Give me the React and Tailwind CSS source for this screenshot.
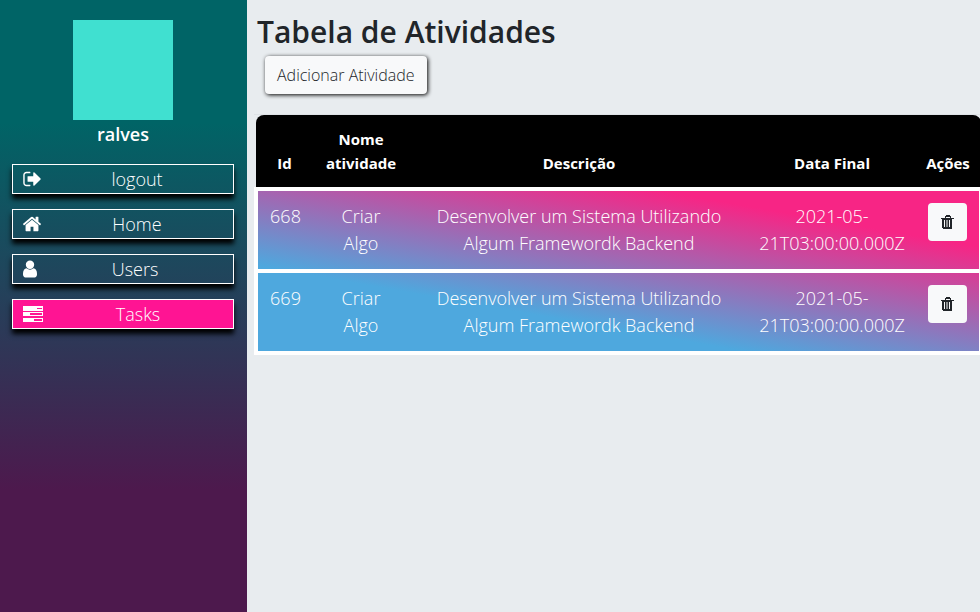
const ICONS = {
  logout: {
    box: "0 0 1568 1792",
    size: "h-5 w-[18px]",
    d: "M640 1440q0 4 1 20t.5 26.5-3 23.5-10 19.5-20.5 6.5h-320q-119 0-203.5-84.5t-84.5-203.5v-704q0-119 84.5-203.5t203.5-84.5h320q13 0 22.5 9.5t9.5 22.5q0 4 1 20t.5 26.5-3 23.5-10 19.5-20.5 6.5h-320q-66 0-113 47t-47 113v704q0 66 47 113t113 47h312l11.5 1 11.5 3 8 5.5 7 9 2 13.5zm928-544q0 26-19 45l-544 544q-19 19-45 19t-45-19-19-45v-288h-448q-26 0-45-19t-19-45v-384q0-26 19-45t45-19h448v-288q0-26 19-45t45-19 45 19l544 544q19 19 19 45z",
  },
  home: {
    box: "90 0 1612 1792",
    size: "h-5 w-[18px]",
    d: "M1472 992v480q0 26-19 45t-45 19h-384v-384h-256v384h-384q-26 0-45-19t-19-45v-480q0-1 .5-3t.5-3l575-474 575 474q1 2 1 6zm223-69l-62 74q-8 9-21 11h-3q-13 0-21-7l-692-577-692 577q-12 8-24 7-13-2-21-11l-62-74q-8-10-7-23.5t11-21.5l719-599q32-26 76-26t76 26l244 204v-195q0-14 9-23t23-9h192q14 0 23 9t9 23v408l219 182q10 8 11 21.5t-7 23.5z",
  },
  user: {
    box: "256 0 1280 1792",
    size: "h-5 w-[14px]",
    d: "M1536 1399q0 109-62.5 187t-150.5 78h-854q-88 0-150.5-78t-62.5-187q0-85 8.5-160.5t31.5-152 58.5-131 94-89 134.5-34.5q131 128 313 128t313-128q76 0 134.5 34.5t94 89 58.5 131 31.5 152 8.5 160.5zm-256-887q0 159-112.5 271.5t-271.5 112.5-271.5-112.5-112.5-271.5 112.5-271.5 271.5-112.5 271.5 112.5 112.5 271.5z",
  },
  tasks: {
    box: "0 0 20 20",
    size: "size-5",
    d: "M0 2h20v5H0zM14 4v1h5V4zM0 8h20v4H0zM7 9v2h12V9zM0 14h20v4H0zM11 15v2h8v-2z",
  },
  trash: {
    box: "0 0 13 14",
    size: "h-3.5 w-[13px]",
    d: "M5 0h4v1h1v2h3v1h-2v10H2V13H1V4H0V3h4V1h1zM5 2v1h4V2zM3 5v7h1V5zM5.5 5v7h1V5zM8 5v7h1V5z",
  },
};

function Icon({ name }) {
  const { box, size, d } = ICONS[name];
  return (
    <svg viewBox={box} className={`${size} shrink-0 fill-current`} fillRule="evenodd" aria-hidden="true">
      <path d={d} />
    </svg>
  );
}

const MENU = [
  { icon: "logout", label: "logout" },
  { icon: "home", label: "Home" },
  { icon: "user", label: "Users" },
  { icon: "tasks", label: "Tasks", active: true },
];

const TASKS = [
  {
    id: 668,
    name: "Criar Algo",
    description: "Desenvolver um Sistema Utilizando Algum Framewordk Backend",
    due: "2021-05-21T03:00:00.000Z",
  },
  {
    id: 669,
    name: "Criar Algo",
    description: "Desenvolver um Sistema Utilizando Algum Framewordk Backend",
    due: "2021-05-21T03:00:00.000Z",
  },
];

function Sidebar() {
  return (
    <aside className="flex w-[247px] shrink-0 flex-col items-center bg-[linear-gradient(180deg,#006466_20%,#4d194d_80%)] pt-5 pr-[13px] pl-3 text-white">
      <div className="size-25 bg-[#40e0d0]" />
      <p className="text-lg leading-7 font-semibold">ralves</p>
      <nav className="mt-4 flex w-full flex-col gap-[15px]">
        {MENU.map(({ icon, label, active }) => (
          <a
            key={label}
            href={`#${label.toLowerCase()}`}
            className={`flex h-[30px] items-center border border-white pl-2.5 text-lg leading-7 font-light shadow-[0_5px_5px_#000] ${
              active ? "bg-[#ff1493]" : ""
            }`}
          >
            <Icon name={icon} />
            <span className="flex-1 text-center">{label}</span>
          </a>
        ))}
      </nav>
    </aside>
  );
}

function TaskTable() {
  return (
    <table className="w-full table-fixed border-collapse text-center text-white">
      <colgroup>
        <col className="w-[57px]" />
        <col className="w-24" />
        <col />
        <col className="w-[166px]" />
        <col className="w-[66px]" />
      </colgroup>
      <thead className="align-bottom text-[15px] leading-6">
        <tr>
          <th className="rounded-tl-lg bg-black px-2 py-3 font-bold">Id</th>
          <th className="bg-black px-2 py-3 font-bold">Nome atividade</th>
          <th className="bg-black px-2 py-3 font-bold">Descrição</th>
          <th className="bg-black px-2 py-3 font-bold">Data Final</th>
          <th className="rounded-tr-lg bg-black px-2 py-3 font-bold">Ações</th>
        </tr>
      </thead>
      <tbody className="bg-[linear-gradient(10deg,#4ea8de_30%,#f72585_80%)] align-top text-lg leading-[27px] font-light">
        {TASKS.map((task) => (
          <tr key={task.id} className="border-4 border-white">
            <td className="px-2 py-3">{task.id}</td>
            <td className="px-3 py-3">{task.name}</td>
            <td className="px-3 py-3">{task.description}</td>
            <td className="px-2 py-3">{task.due}</td>
            <td className="px-2 py-3">
              <button
                type="button"
                aria-label={`Excluir atividade ${task.id}`}
                className="inline-flex h-[38px] w-[39px] items-center justify-center rounded bg-[#f8f9fa] align-top text-[#212529]"
              >
                <Icon name="trash" />
              </button>
            </td>
          </tr>
        ))}
      </tbody>
    </table>
  );
}

export default function App() {
  return (
    <div className="flex min-h-screen bg-[#e8ecef] font-['Open_Sans','Noto_Sans',sans-serif]">
      <Sidebar />
      <main className="min-w-0 flex-1 overflow-hidden pt-3 pl-2.5">
        <h1 className="text-3xl leading-10 font-semibold text-[#212529]">Tabela de Atividades</h1>
        <button
          type="button"
          className="mt-1 ml-2 h-[38px] rounded bg-[#f8f9fa] px-3 text-base leading-6 font-light text-[#212529] shadow-[1px_1px_4px_#000]"
        >
          Adicionar Atividade
        </button>
        <div className="mt-5 -mr-[3px] -ml-[3px] border-t border-[#dee2e6]">
          <TaskTable />
        </div>
      </main>
    </div>
  );
}
